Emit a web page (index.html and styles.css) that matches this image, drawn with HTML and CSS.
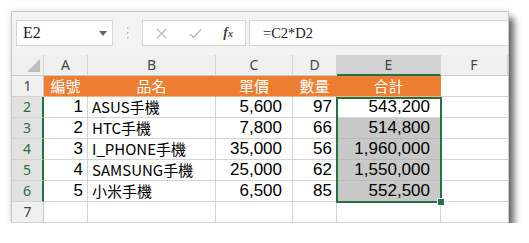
FILE: index.html
```html
<!DOCTYPE html>
<html lang="zh-Hant">

<head>
    <meta charset="UTF-8">
    <title>Excel 合計</title>
    <link rel="stylesheet" href="styles.css">
</head>

<body>
    <div class="window">
        <!-- Formula bar -->
        <div class="toolbar">
            <div class="name-box">
                <span>E2</span>
                <svg class="drop" width="8" height="5" viewBox="0 0 8 5"><polygon points="0,0 8,0 4,5" fill="#666"/></svg>
            </div>
            <div class="grip">
                <svg width="3" height="14" viewBox="0 0 3 14">
                    <rect x="1" y="1" width="1.4" height="1.4" fill="#aaa"/>
                    <rect x="1" y="6" width="1.4" height="1.4" fill="#aaa"/>
                    <rect x="1" y="11" width="1.4" height="1.4" fill="#aaa"/>
                </svg>
            </div>
            <div class="fx-box">
                <svg width="11" height="11" viewBox="0 0 11 11"><path d="M1 1 L10 10 M10 1 L1 10" stroke="#bbb" stroke-width="1.2" fill="none"/></svg>
                <svg width="13" height="11" viewBox="0 0 13 11"><path d="M1 6 L4.5 9.5 L12 1.5" stroke="#bbb" stroke-width="1.4" fill="none"/></svg>
                <span class="fx">f<small>x</small></span>
            </div>
            <div class="formula">=C2*D2</div>
        </div>

        <!-- Sheet -->
        <div class="sheet">
            <div class="corner"><svg width="13" height="13" viewBox="0 0 13 13"><polygon points="13,0 13,13 0,13" fill="#bdbdbd"/></svg></div>
            <div class="col-hd">A</div>
            <div class="col-hd">B</div>
            <div class="col-hd">C</div>
            <div class="col-hd">D</div>
            <div class="col-hd sel">E</div>
            <div class="col-hd last">F</div>

            <div class="row-hd">1</div>
            <div class="cell head">編號</div>
            <div class="cell head">品名</div>
            <div class="cell head">單價</div>
            <div class="cell head">數量</div>
            <div class="cell head">合計</div>
            <div class="cell last"></div>

            <div class="row-hd sel">2</div>
            <div class="cell num">1</div>
            <div class="cell">ASUS手機</div>
            <div class="cell num wide">5,600</div>
            <div class="cell num">97</div>
            <div class="cell num wide">543,200</div>
            <div class="cell last"></div>

            <div class="row-hd sel">3</div>
            <div class="cell num">2</div>
            <div class="cell">HTC手機</div>
            <div class="cell num wide">7,800</div>
            <div class="cell num">66</div>
            <div class="cell num wide shade">514,800</div>
            <div class="cell last"></div>

            <div class="row-hd sel">4</div>
            <div class="cell num">3</div>
            <div class="cell">I_PHONE手機</div>
            <div class="cell num wide">35,000</div>
            <div class="cell num">56</div>
            <div class="cell num wide shade">1,960,000</div>
            <div class="cell last"></div>

            <div class="row-hd sel">5</div>
            <div class="cell num">4</div>
            <div class="cell">SAMSUNG手機</div>
            <div class="cell num wide">25,000</div>
            <div class="cell num">62</div>
            <div class="cell num wide shade">1,550,000</div>
            <div class="cell last"></div>

            <div class="row-hd sel">6</div>
            <div class="cell num">5</div>
            <div class="cell">小米手機</div>
            <div class="cell num wide">6,500</div>
            <div class="cell num">85</div>
            <div class="cell num wide shade">552,500</div>
            <div class="cell last"></div>

            <div class="row-hd">7</div>
            <div class="cell"></div>
            <div class="cell"></div>
            <div class="cell"></div>
            <div class="cell"></div>
            <div class="cell"></div>
            <div class="cell last"></div>

            <!-- Selection outline E2:E6 -->
            <div class="selection"><span class="handle"></span></div>
        </div>
    </div>
</body>

</html>
```

FILE: styles.css
```css
/* General */
body {
    margin: 0;
    background: #fff;
    font-family: "Noto Sans CJK TC", "Noto Sans", sans-serif;
}

/* Window frame */
.window {
    margin: 11px 0 0 11px;
    width: 498px;
    height: 212px;
    box-sizing: border-box;
    border: 1px solid #c9c9c9;
    border-bottom: none;
    background: #f3f3f3;
    box-shadow: 5px 7px 7px rgba(0, 0, 0, 0.6), 0 0 6px rgba(0, 0, 0, 0.12);
    overflow: hidden;
}

/* Formula bar */
.toolbar {
    display: flex;
    align-items: center;
    height: 43px;
    padding: 8px 0 9px 4px;
    box-sizing: border-box;
}

.name-box,
.fx-box,
.formula {
    height: 26px;
    box-sizing: border-box;
    border: 1px solid #d6d6d6;
    background: #fff;
    display: flex;
    align-items: center;
}

.name-box {
    width: 97px;
    padding: 0 5px 0 6px;
    justify-content: space-between;
    font-family: "Liberation Serif", serif;
    font-size: 16px;
    color: #222;
}

.grip {
    width: 29px;
    display: flex;
    justify-content: center;
}

.fx-box {
    width: 104px;
    padding: 0 12px 0 13px;
    justify-content: space-between;
}

.fx {
    font-family: "Liberation Serif", serif;
    font-style: italic;
    font-weight: bold;
    font-size: 14px;
    color: #444;
}

.fx small {
    font-size: 10px;
}

.formula {
    flex: 1;
    margin-left: 3px;
    padding-left: 13px;
    border-right: none;
    font-family: "Liberation Serif", serif;
    font-size: 14.5px;
    color: #222;
}

/* Sheet grid */
.sheet {
    position: relative;
    display: grid;
    grid-template-columns: 32px 44px 128px 77px 44px 104px 1fr;
    grid-auto-rows: 21px;
    background: #fff;
}

.sheet > div {
    box-sizing: border-box;
}

.corner {
    background: #f0f0f0;
    border-right: 1px solid #d4d4d4;
    border-bottom: 1px solid #c8c8c8;
    display: flex;
    align-items: flex-end;
    justify-content: flex-end;
    padding: 0 3px 3px 0;
}

.col-hd {
    background: #f0f0f0;
    border-right: 1px solid #d4d4d4;
    border-bottom: 1px solid #c8c8c8;
    font-family: "Noto Sans", sans-serif;
    font-size: 14px;
    line-height: 18px;
    color: #444;
    display: flex;
    align-items: center;
    justify-content: center;
}

.col-hd.sel {
    background: #d2d2d2;
    border-bottom: 2px solid #217346;
}

.row-hd {
    background: #f0f0f0;
    border-right: 1px solid #c8c8c8;
    border-bottom: 1px solid #d4d4d4;
    font-family: "Noto Sans", sans-serif;
    font-size: 14px;
    line-height: 18px;
    color: #444;
    display: flex;
    align-items: center;
    justify-content: center;
}

.row-hd.sel {
    background: #e1e1e1;
    color: #217346;
    border-right: 2px solid #217346;
}

.cell {
    border-right: 1px solid #d4d4d4;
    border-bottom: 1px solid #d4d4d4;
    padding: 0 4px;
    font-size: 15px;
    line-height: 18px;
    color: #000;
    display: flex;
    align-items: center;
    white-space: nowrap;
}

.cell.last {
    border-right: none;
}

.cell.head {
    background: #ed7d31;
    border-right-color: #ed7d31;
    border-bottom-color: #f4b183;
    color: #fff;
    justify-content: center;
}

.cell.num {
    justify-content: flex-end;
    font-family: "Liberation Sans", sans-serif;
    font-size: 17px;
}

.cell.wide {
    padding-right: 10px;
}

.cell.shade {
    background: #c8c8c8;
    border-color: #b9b9b9;
}

/* Selection outline */
.selection {
    position: absolute;
    left: 324px;
    top: 42px;
    width: 106px;
    height: 106px;
    border: 2px solid #217346;
    pointer-events: none;
}

.handle {
    position: absolute;
    right: -5px;
    bottom: -5px;
    width: 6px;
    height: 6px;
    background: #217346;
    border: 1px solid #fff;
}
```
